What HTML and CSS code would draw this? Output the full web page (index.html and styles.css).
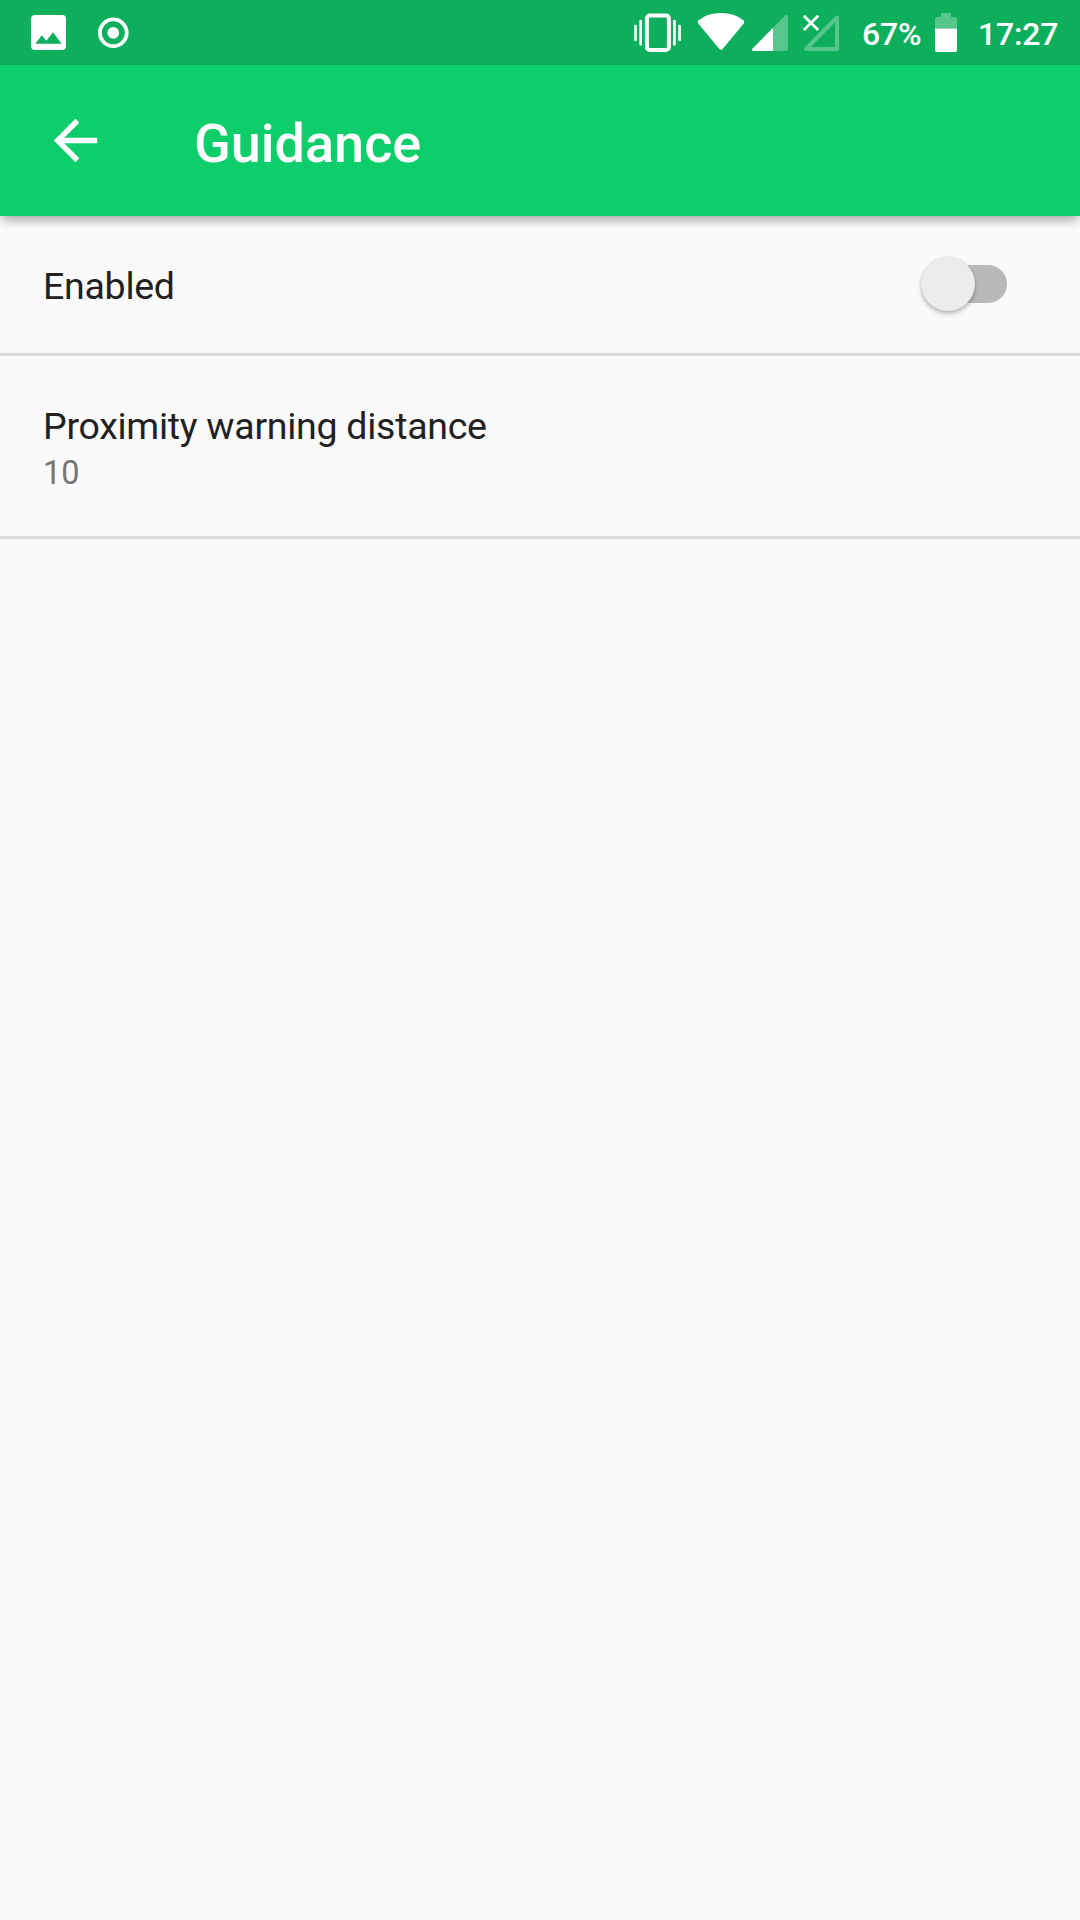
FILE: index.html
```html
<!DOCTYPE html>
<html lang="en">
<head>
<meta charset="utf-8">
<title>Guidance</title>
<link rel="stylesheet" href="styles.css">
</head>
<body>
<header class="top">
  <div class="status-bar">
    <div class="notifications">
      <svg width="36" height="36" viewBox="0 0 36 36"><path fill="#fff" fill-rule="evenodd" d="M4 0H31.300Q35 0 35 3.900V31Q35 35 31 35H4Q0 35 0 31V3.900Q0 0 4 0ZM4.300 28.800H30.600L22 17.300L15.400 25.800L10.800 20.200Z"/></svg>
      <svg width="32" height="32" viewBox="0 0 32 32"><circle cx="16.300" cy="15.800" r="13.400" fill="none" stroke="#fff" stroke-width="3.800"/><circle cx="16.300" cy="15.800" r="5.900" fill="#fff"/></svg>
    </div>
    <div class="system">
      <svg width="48" height="65" viewBox="0 0 48 65"><rect x="12.900" y="15.500" width="22" height="34.500" rx="3" fill="none" stroke="#fff" stroke-width="4"/><path d="M1.500 26V40M6.700 21V44.500M40.400 21V44.500M45.600 26V40" stroke="#fff" stroke-width="2.700" stroke-linecap="round"/></svg>
      <svg class="wifi" width="48" height="65" viewBox="0 0 48 65"><path fill="#fff" d="M1.300 23.500Q0 21.800 1.600 20.300Q10.500 13 24 13T46.400 20.300Q48 21.800 46.700 23.500L25.800 48.800Q24 50.800 22.200 48.800Z"/></svg>
      <svg class="signal" width="36" height="65" viewBox="0 0 36 65"><path fill="#fff" fill-opacity=".3" d="M21 27.800L32.700 15.800Q36 13.300 36 17V49Q36 51 34 51H21Z"/><path fill="#fff" d="M21 27.800V51H1.500Q-1 51 .6 48.600Z"/></svg>
      <svg class="no-sim" width="36" height="65" viewBox="0 0 36 65"><path d="M34 17.500V49H3Z" fill="none" stroke="#fff" stroke-opacity=".3" stroke-width="4" stroke-linejoin="round"/><path d="M.8 15.800L15.200 30M15.200 15.800L.8 30" stroke="#fff" stroke-width="2.700"/></svg>
      <span class="percent">67%</span>
      <svg class="battery" width="22" height="65" viewBox="0 0 22 65"><path fill="#fff" fill-opacity=".3" d="M6 13H16V17H20Q22 17 22 19V28.500H0V19Q0 17 2 17H6Z"/><path fill="#fff" d="M0 28.500H22V50Q22 52 20 52H2Q0 52 0 50Z"/></svg>
      <span class="clock">17:27</span>
    </div>
  </div>
  <div class="app-bar">
    <svg class="back" width="65" height="65" viewBox="0 0 24 24"><path fill="#fff" d="M20 11H7.830l5.590-5.590L12 4l-8 8 8 8 1.410-1.410L7.830 13H20v-2z"/></svg>
    <h1 class="title">Guidance</h1>
  </div>
</header>
<main>
  <div class="row row-toggle">
    <span class="label">Enabled</span>
    <div class="switch"><span class="thumb"></span></div>
  </div>
  <div class="row row-value">
    <span class="label">Proximity warning distance</span>
    <span class="value">10</span>
  </div>
</main>
</body>
</html>
```
FILE: styles.css
```css
* { box-sizing: border-box; }
body {
  margin: 0;
  min-height: 1920px;
  background: #fafafa;
  color: #212121;
  font-family: Roboto, sans-serif;
}
svg { display: block; flex: none; }
.top {
  position: relative;
  height: 216px;
  background: #0dce6a;
  box-shadow: 0 6px 10px -2px rgba(0, 0, 0, .34);
}
.status-bar {
  display: flex;
  justify-content: space-between;
  height: 65px;
  padding: 0 22px 0 31px;
  background: #0dae5c;
  color: #fff;
}
.notifications {
  display: flex;
  align-items: center;
  gap: 30px;
}
.system {
  display: flex;
  font-size: 32px;
  font-weight: 500;
  line-height: 69px;
}
.wifi { margin-left: 15px; }
.signal { margin-left: 7px; }
.no-sim { margin-left: 15px; }
.percent { width: 60px; margin-left: 23px; letter-spacing: -.2px; }
.battery { margin-left: 13px; }
.clock { width: 80px; margin-left: 21px; letter-spacing: -.2px; }
.app-bar {
  display: flex;
  align-items: center;
  height: 151px;
  padding: 0 43px;
}
.back { margin-top: -1px; }
.title {
  margin: 6px 0 0 86px;
  color: #fff;
  font-size: 54px;
  font-weight: 500;
  line-height: 64px;
}
.row {
  display: flex;
  padding: 0 43px;
  border-bottom: 3px solid #dadada;
}
.row-toggle {
  align-items: center;
  justify-content: space-between;
  height: 140px;
  padding: 2px 73px 0 43px;
}
.row-value {
  flex-direction: column;
  height: 183px;
  padding-top: 47px;
}
.label {
  font-size: 37.5px;
  line-height: 46px;
  letter-spacing: -.27px;
}
.value {
  color: #757575;
  font-size: 32.4px;
  line-height: 48px;
}
.switch {
  display: flex;
  align-items: center;
  width: 76px;
  height: 38px;
  margin-top: -3px;
  border-radius: 19px;
  background: #b9b9b9;
}
.thumb {
  flex: none;
  width: 54px;
  height: 54px;
  margin-left: -10px;
  border-radius: 50%;
  background: #ececec;
  box-shadow: 0 3px 4px rgba(0, 0, 0, .25), 0 0 2px rgba(0, 0, 0, .12);
}
```
